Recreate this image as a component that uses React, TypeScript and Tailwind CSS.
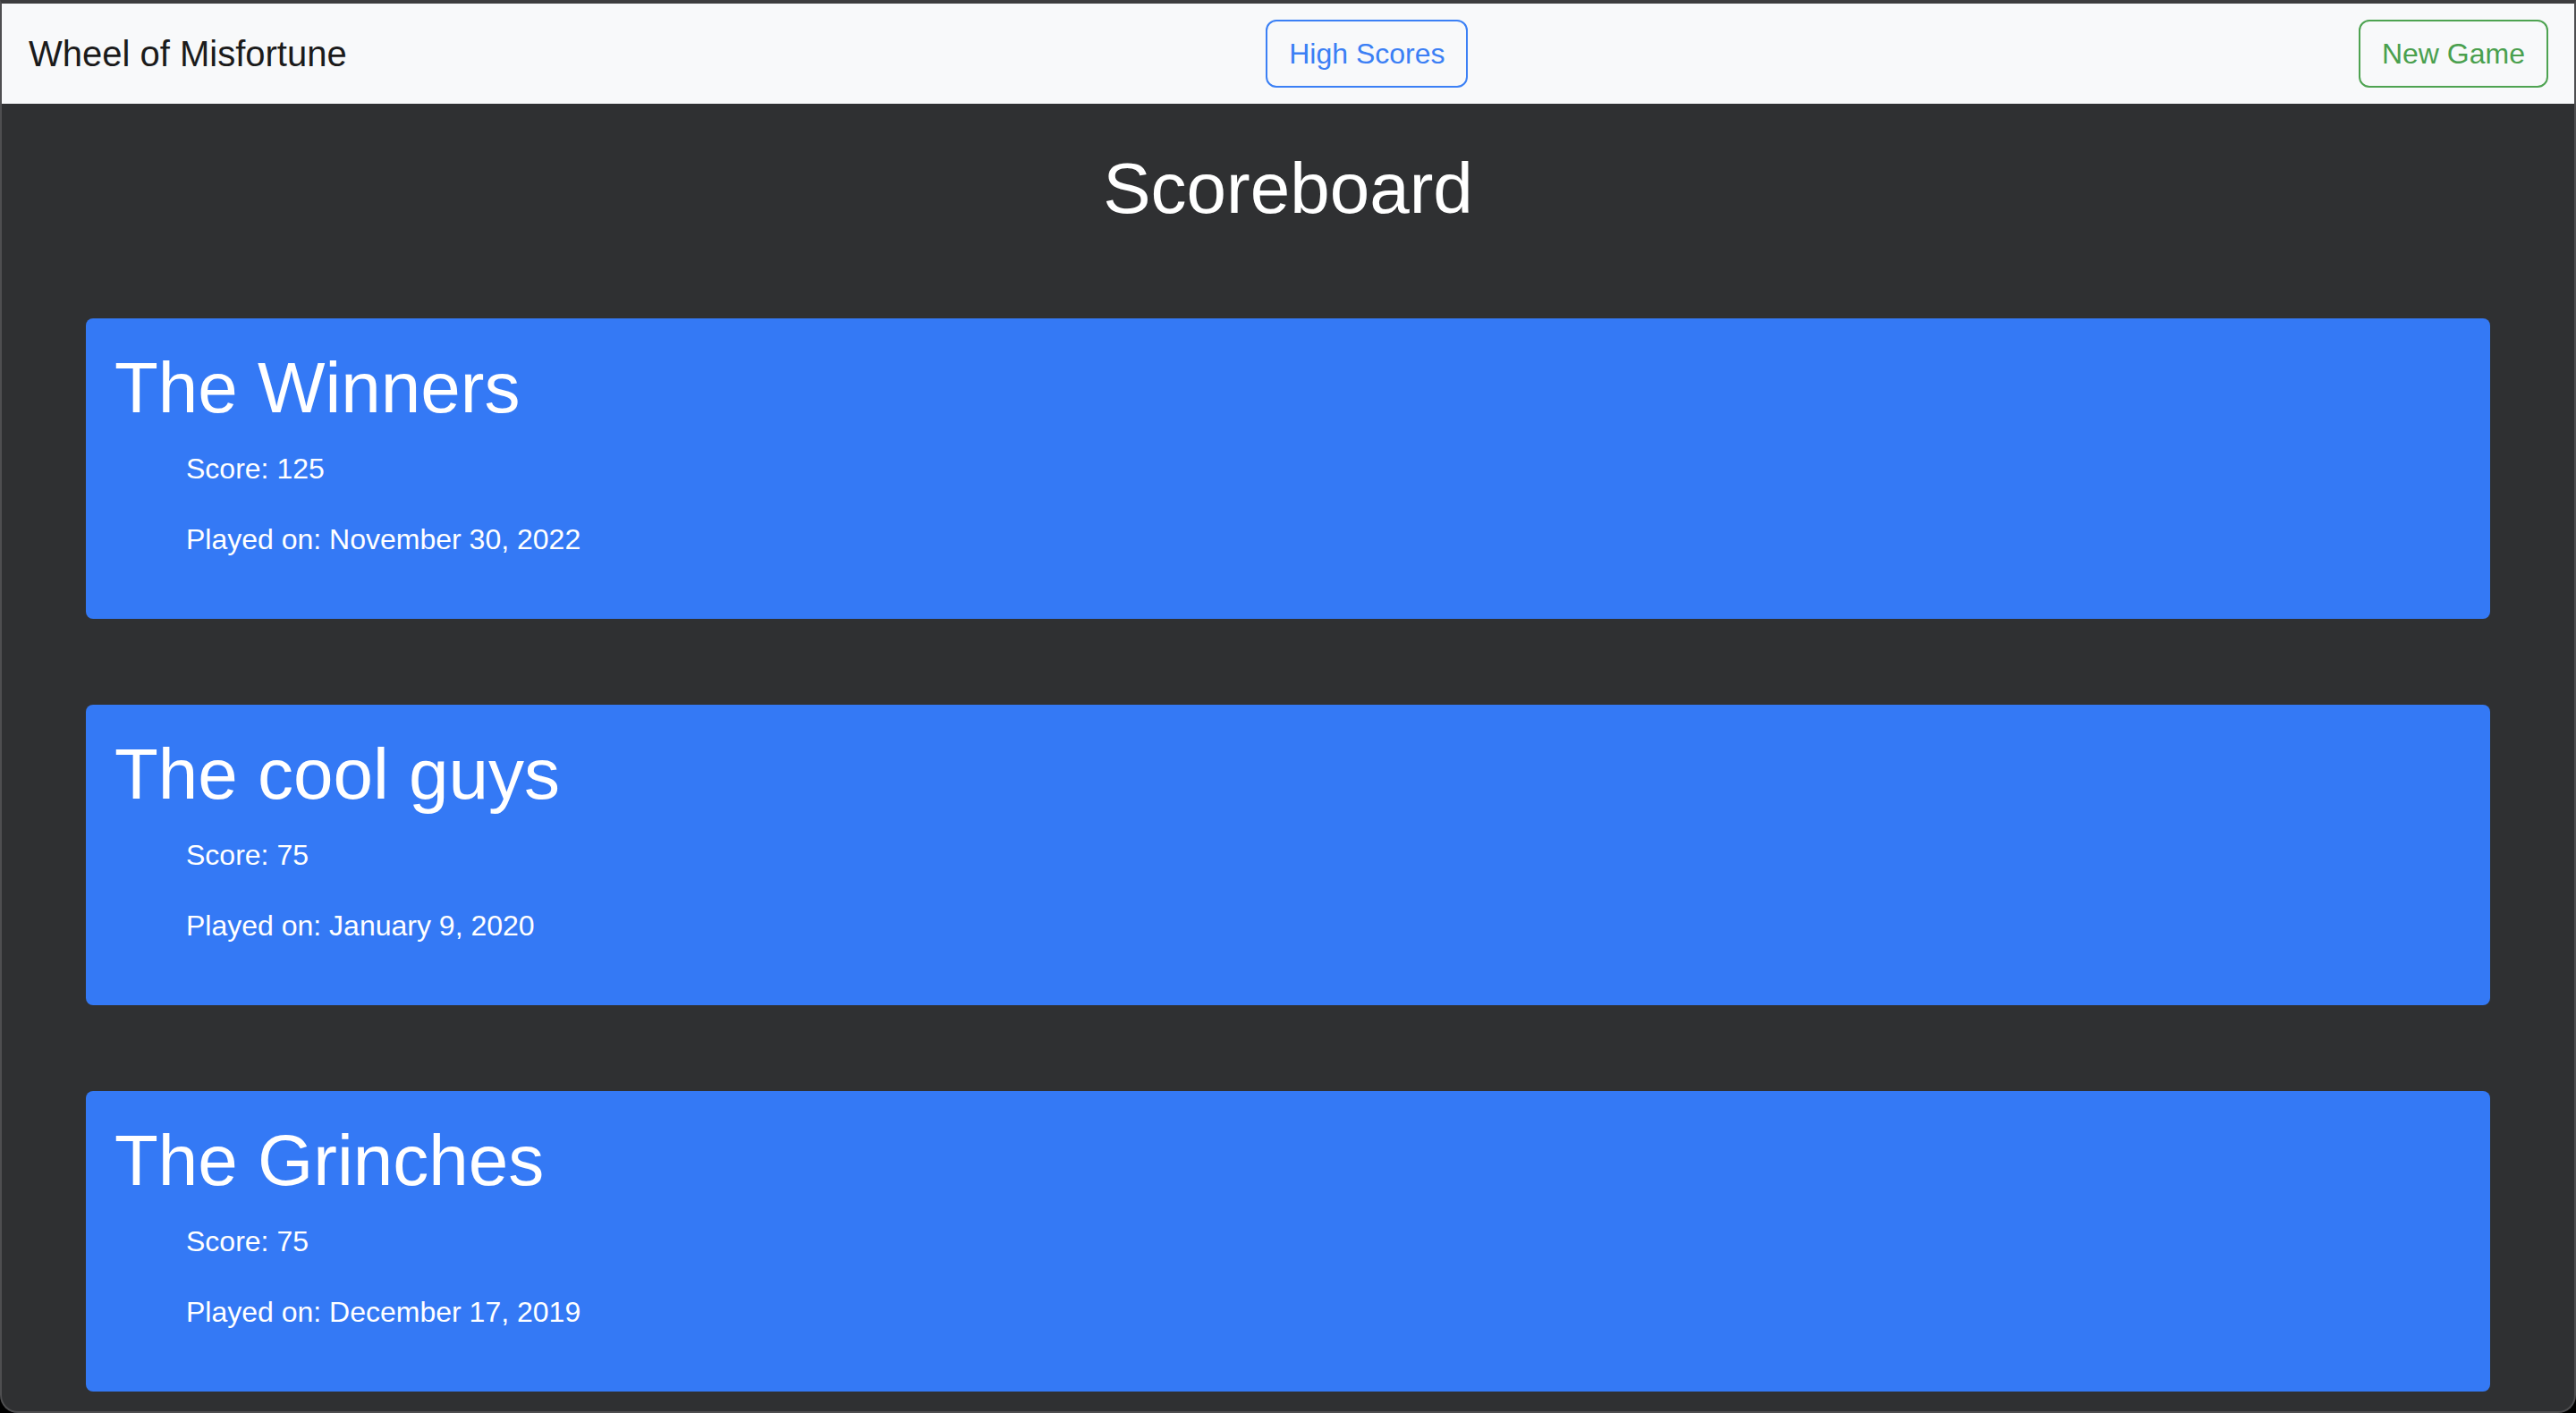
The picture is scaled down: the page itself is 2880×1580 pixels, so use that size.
import React from 'react';

interface Game {
  id: number;
  team: string;
  score: number;
  playedOn: string;
}

const games: Game[] = [
  { id: 1, team: 'The Winners', score: 125, playedOn: 'November 30, 2022' },
  { id: 2, team: 'The cool guys', score: 75, playedOn: 'January 9, 2020' },
  { id: 3, team: 'The Grinches', score: 75, playedOn: 'December 17, 2019' },
];

const ScoreCard: React.FC<{ game: Game }> = ({ game }) => (
  <div className="mx-[94px] mb-[96px] rounded-[8px] bg-[#3479f5] px-[32px] pt-[30px] pb-[65px] text-white">
    <h2 className="text-[80px] leading-[96px] font-normal">{game.team}</h2>
    <div className="mt-[18px] pl-[80px] text-[32px] leading-[48px]">
      <p>Score: {game.score}</p>
      <p className="mt-[31px]">Played on: {game.playedOn}</p>
    </div>
  </div>
);

export default function App() {
  return (
    <div className="h-[1580px] w-[2880px] bg-black font-['Liberation_Sans',Arial,sans-serif]">
      <div className="flex h-full flex-col overflow-hidden rounded-b-[20px] border-x-2 border-b-2 border-t-4 border-x-[#4e4e50] border-b-[#4e4e50] border-t-[#3d3d3f] bg-[#2f3032]">
        {/* navbar */}
        <nav className="flex h-[112px] shrink-0 items-center justify-between bg-[#f8f9fa] pl-[30px] pr-[29px]">
          <span className="mr-[32px] text-[40px] leading-[60px] text-[#1b1b1b]">Wheel of Misfortune</span>
          <button className="h-[76px] rounded-[12px] border-2 border-[#3b80f5] px-[24px] text-[32px] leading-[48px] text-[#3b7ff5]">
            High Scores
          </button>
          <button className="h-[76px] rounded-[12px] border-2 border-[#4ea351] px-[24px] text-[32px] leading-[48px] text-[#4aa04e]">
            New Game
          </button>
        </nav>

        <main className="flex-1">
          <h1 className="pt-[47px] pb-[97px] text-center text-[80px] leading-[96px] font-normal text-white">
            Scoreboard
          </h1>
          {games.map((g) => (
            <ScoreCard key={g.id} game={g} />
          ))}
        </main>
      </div>
    </div>
  );
}
